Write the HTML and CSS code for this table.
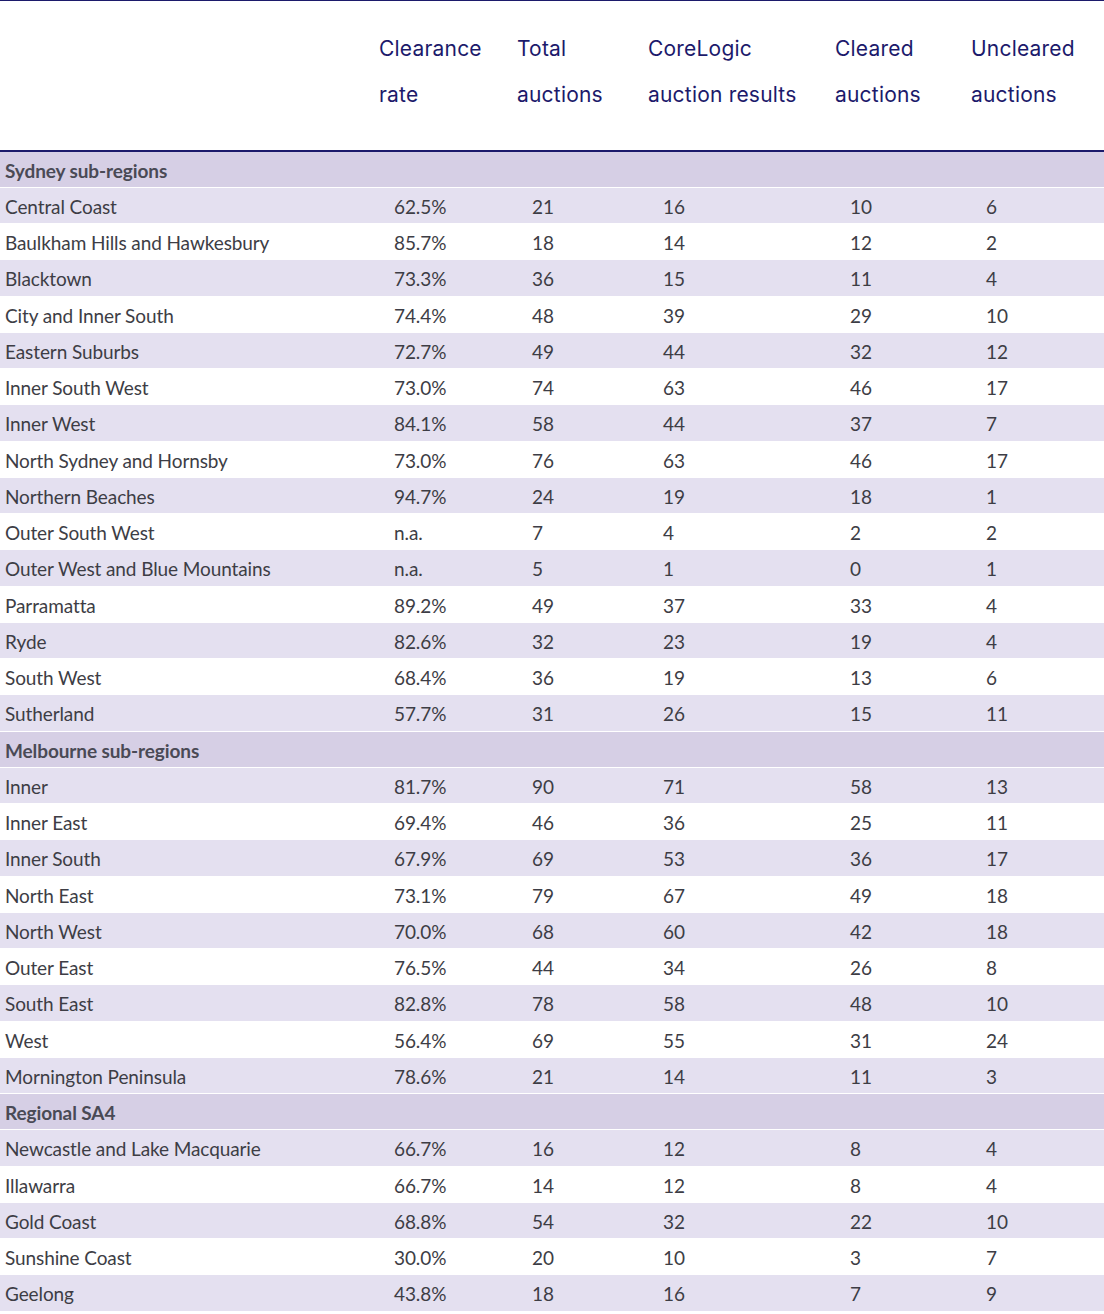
FILE: index.html
```html
<!DOCTYPE html>
<html lang="en">
<head>
<meta charset="utf-8">
<title>Auction results by sub-region</title>
<link rel="stylesheet" href="styles.css">
</head>
<body>
<div class="table-wrap">
<table class="results">
  <colgroup>
    <col class="c-name"><col class="c-rate"><col class="c-total"><col class="c-corelogic"><col class="c-cleared"><col class="c-uncleared">
  </colgroup>
  <thead>
    <tr>
      <th></th>
      <th>Clearance<br>rate</th>
      <th>Total<br>auctions</th>
      <th>CoreLogic<br>auction results</th>
      <th>Cleared<br>auctions</th>
      <th>Uncleared<br>auctions</th>
    </tr>
  </thead>
  <tbody>
    <tr class="group"><td colspan="6">Sydney sub-regions</td></tr>
    <tr class="alt"><td>Central Coast</td><td>62.5%</td><td>21</td><td>16</td><td>10</td><td>6</td></tr>
    <tr><td>Baulkham Hills and Hawkesbury</td><td>85.7%</td><td>18</td><td>14</td><td>12</td><td>2</td></tr>
    <tr class="alt"><td>Blacktown</td><td>73.3%</td><td>36</td><td>15</td><td>11</td><td>4</td></tr>
    <tr><td>City and Inner South</td><td>74.4%</td><td>48</td><td>39</td><td>29</td><td>10</td></tr>
    <tr class="alt"><td>Eastern Suburbs</td><td>72.7%</td><td>49</td><td>44</td><td>32</td><td>12</td></tr>
    <tr><td>Inner South West</td><td>73.0%</td><td>74</td><td>63</td><td>46</td><td>17</td></tr>
    <tr class="alt"><td>Inner West</td><td>84.1%</td><td>58</td><td>44</td><td>37</td><td>7</td></tr>
    <tr><td>North Sydney and Hornsby</td><td>73.0%</td><td>76</td><td>63</td><td>46</td><td>17</td></tr>
    <tr class="alt"><td>Northern Beaches</td><td>94.7%</td><td>24</td><td>19</td><td>18</td><td>1</td></tr>
    <tr><td>Outer South West</td><td>n.a.</td><td>7</td><td>4</td><td>2</td><td>2</td></tr>
    <tr class="alt"><td>Outer West and Blue Mountains</td><td>n.a.</td><td>5</td><td>1</td><td>0</td><td>1</td></tr>
    <tr><td>Parramatta</td><td>89.2%</td><td>49</td><td>37</td><td>33</td><td>4</td></tr>
    <tr class="alt"><td>Ryde</td><td>82.6%</td><td>32</td><td>23</td><td>19</td><td>4</td></tr>
    <tr><td>South West</td><td>68.4%</td><td>36</td><td>19</td><td>13</td><td>6</td></tr>
    <tr class="alt"><td>Sutherland</td><td>57.7%</td><td>31</td><td>26</td><td>15</td><td>11</td></tr>
    <tr class="group"><td colspan="6">Melbourne sub-regions</td></tr>
    <tr class="alt"><td>Inner</td><td>81.7%</td><td>90</td><td>71</td><td>58</td><td>13</td></tr>
    <tr><td>Inner East</td><td>69.4%</td><td>46</td><td>36</td><td>25</td><td>11</td></tr>
    <tr class="alt"><td>Inner South</td><td>67.9%</td><td>69</td><td>53</td><td>36</td><td>17</td></tr>
    <tr><td>North East</td><td>73.1%</td><td>79</td><td>67</td><td>49</td><td>18</td></tr>
    <tr class="alt"><td>North West</td><td>70.0%</td><td>68</td><td>60</td><td>42</td><td>18</td></tr>
    <tr><td>Outer East</td><td>76.5%</td><td>44</td><td>34</td><td>26</td><td>8</td></tr>
    <tr class="alt"><td>South East</td><td>82.8%</td><td>78</td><td>58</td><td>48</td><td>10</td></tr>
    <tr><td>West</td><td>56.4%</td><td>69</td><td>55</td><td>31</td><td>24</td></tr>
    <tr class="alt"><td>Mornington Peninsula</td><td>78.6%</td><td>21</td><td>14</td><td>11</td><td>3</td></tr>
    <tr class="group"><td colspan="6">Regional SA4</td></tr>
    <tr class="alt"><td>Newcastle and Lake Macquarie</td><td>66.7%</td><td>16</td><td>12</td><td>8</td><td>4</td></tr>
    <tr><td>Illawarra</td><td>66.7%</td><td>14</td><td>12</td><td>8</td><td>4</td></tr>
    <tr class="alt"><td>Gold Coast</td><td>68.8%</td><td>54</td><td>32</td><td>22</td><td>10</td></tr>
    <tr><td>Sunshine Coast</td><td>30.0%</td><td>20</td><td>10</td><td>3</td><td>7</td></tr>
    <tr class="alt"><td>Geelong</td><td>43.8%</td><td>18</td><td>16</td><td>7</td><td>9</td></tr>
  </tbody>
</table>
</div>
</body>
</html>
```

FILE: styles.css
```css
html, body {
  margin: 0;
  padding: 0;
  background: #ffffff;
}

.table-wrap {
  width: 1104px;
  border-top: 1px solid #1c1a6b;
}

.results {
  width: 100%;
  border-collapse: collapse;
  table-layout: fixed;
}

.c-name { width: 374px; }
.c-rate { width: 138px; }
.c-total { width: 131px; }
.c-corelogic { width: 187px; }
.c-cleared { width: 136px; }
.c-uncleared { width: 138px; }

.results thead th {
  font-family: "Inter", "Liberation Sans", sans-serif;
  font-weight: 400;
  font-size: 21px;
  letter-spacing: 0.2px;
  line-height: 46px;
  color: #1c1a6b;
  text-align: left;
  padding: 25px 0 32px 5px;
  border-bottom: 2px solid #1c1a6b;
  white-space: nowrap;
}

.results tbody td {
  font-family: "Lato", "Liberation Sans", sans-serif;
  font-size: 19px;
  letter-spacing: -0.1px;
  color: #3d3d45;
  height: 36.25px;
  padding: 2px 0 0 20px;
  border-bottom: 1px solid #ffffff;
  white-space: nowrap;
  vertical-align: middle;
  box-sizing: border-box;
}

.results tbody td:first-child {
  padding-left: 5px;
}

.results tbody tr.alt td {
  background: #e4e0f0;
}

.results tbody tr.group td {
  background: #d6cfe5;
  font-weight: 700;
  color: #4a4a55;
}
```
